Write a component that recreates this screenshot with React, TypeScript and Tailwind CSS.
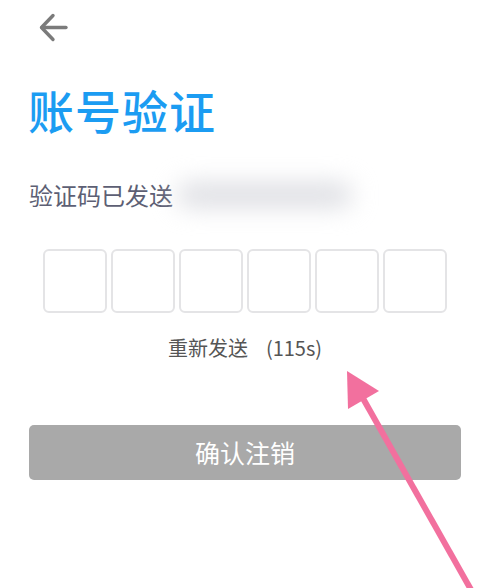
import React from "react";

const font = { fontFamily: '"Noto Sans CJK SC", "Noto Sans", sans-serif' };

export default function App() {
  const cells = [0, 1, 2, 3, 4, 5];
  return (
    <div className="relative h-[588px] w-[490px] overflow-hidden bg-white" style={font}>
      {/* back */}
      <div className="pl-[39px] pt-[13px]">
        <svg width="30" height="30" viewBox="0 0 30 30" fill="none" stroke="#7b7b7b" strokeWidth="3.4" strokeLinecap="round" strokeLinejoin="round">
          <path d="M27 14.5H3" />
          <path d="M14 2.5L2.5 14.5L14 26.5" />
        </svg>
      </div>

      <h1 className="mt-[38px] pl-[28px] text-[46px] font-medium leading-[56px] tracking-[1px] text-[#1b9cf2]">账号验证</h1>

      <div className="mt-[42px] flex items-center pl-[29px]">
        <span className="text-[24px] leading-[32px] text-[#5d5f74]">验证码已发送</span>
        <span className="ml-1 h-[24px] w-[175px] rounded-full bg-[#dcdde2] blur-md" />
      </div>

      <div className="mt-[38px] flex gap-[4px] pl-[43px]">
        {cells.map((c) => (
          <div key={c} className="h-[64px] w-[64px] rounded-[6px] border-2 border-[#e4e4e6] bg-white" />
        ))}
      </div>

      <p className="mt-[21px] text-center text-[20px] leading-[28px] text-[#555555]">
        重新发送<span className="ml-[18px]">(115s)</span>
      </p>

      <div className="mt-[63px] px-[29px]">
        <button className="flex h-[55px] w-full items-center justify-center rounded-[5px] bg-[#a9a9a9] text-[25px] text-white">
          确认注销
        </button>
      </div>

      {/* annotation arrow */}
      <svg className="pointer-events-none absolute left-0 top-0" width="490" height="588" viewBox="0 0 490 588">
        <line x1="356" y1="386" x2="474" y2="595" stroke="#f2709e" strokeWidth="6" />
        <polygon points="347,371 379,391 348,409" fill="#f2709e" />
      </svg>
    </div>
  );
}
